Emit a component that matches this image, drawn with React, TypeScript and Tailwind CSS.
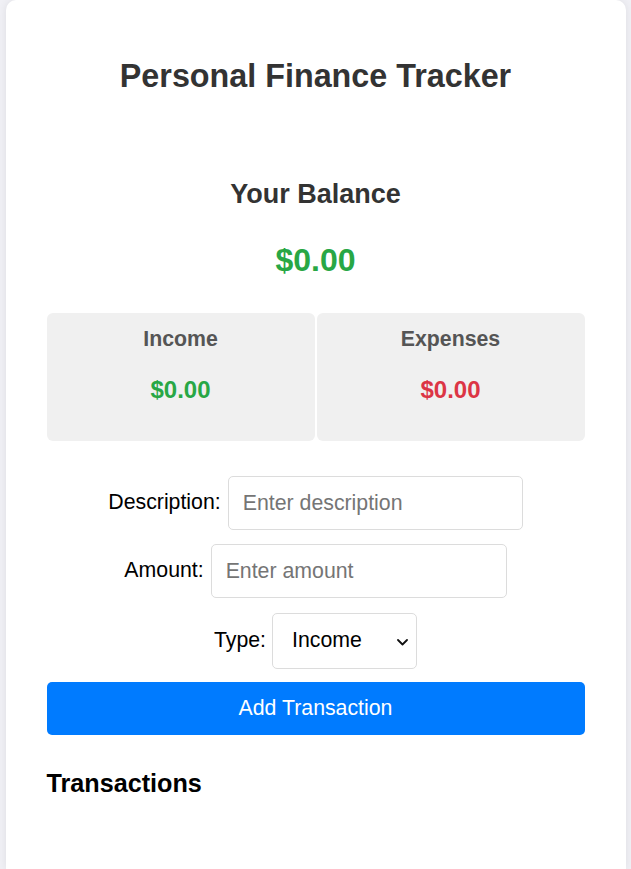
import React from "react";

export default function App() {
  const font = { fontFamily: '"Liberation Sans", Arial, sans-serif' };
  return (
    <div className="min-h-screen bg-[#f0f0f5]" style={font}>
      <div className="mx-auto w-[620px] min-h-[869px] bg-white rounded-t-[10px] shadow-[0_0_8px_rgba(0,0,0,0.08)] px-[41px] pt-[58px]">
        <h1 className="text-center text-[32.3px] leading-[37px] font-bold text-[#333]">
          Personal Finance Tracker
        </h1>
        <h2 className="mt-[84px] text-center text-[27px] leading-[30px] font-bold text-[#333]">
          Your Balance
        </h2>
        <div className="mt-[33px] text-center text-[32px] leading-[37px] font-bold text-[#28a745]">
          $0.00
        </div>
        <div className="mt-[34px] grid grid-cols-2 gap-[2px]">
          <div className="h-[128px] rounded-[6px] bg-[#f0f0f0] pt-[14px] text-center">
            <div className="text-[21.3px] leading-[25px] font-bold text-[#555]">Income</div>
            <div className="mt-[24px] text-[24px] leading-[28px] font-bold text-[#28a745]">$0.00</div>
          </div>
          <div className="h-[128px] rounded-[6px] bg-[#f0f0f0] pt-[14px] text-center">
            <div className="text-[21.3px] leading-[25px] font-bold text-[#555]">Expenses</div>
            <div className="mt-[24px] text-[24px] leading-[28px] font-bold text-[#dc3545]">$0.00</div>
          </div>
        </div>
        <div className="mt-[35px] flex flex-col items-center gap-[14px] text-[21.3px] text-black">
          <div className="flex items-center gap-[7px]">
            <label>Description:</label>
            <input
              className="h-[54px] w-[295px] rounded-[5px] border border-[#dcdcdc] px-[14px] text-[21.3px] placeholder:text-[#757575] outline-none"
              placeholder="Enter description"
            />
          </div>
          <div className="flex items-center gap-[7px]">
            <label>Amount:</label>
            <input
              className="h-[54px] w-[296px] rounded-[5px] border border-[#dcdcdc] px-[14px] text-[21.3px] placeholder:text-[#757575] outline-none"
              placeholder="Enter amount"
            />
          </div>
          <div className="mt-[1px] flex items-center gap-[6px]">
            <label>Type:</label>
            <div className="relative h-[56px] w-[145px] rounded-[5px] border border-[#dcdcdc] flex items-center pl-[19px]">
              <span>Income</span>
              <svg className="absolute right-[8px] top-[25px]" width="11" height="7" viewBox="0 0 11 7" fill="none">
                <path d="M1 1l4.5 4.5L10 1" stroke="#111" strokeWidth="1.8" strokeLinecap="round" strokeLinejoin="round" />
              </svg>
            </div>
          </div>
        </div>
        <button className="mt-[13px] h-[53px] w-full rounded-[5px] bg-[#007bff] text-[21.3px] text-white">
          Add Transaction
        </button>
        <h3 className="mt-[34px] text-[25.2px] leading-[28px] font-bold text-black">Transactions</h3>
      </div>
    </div>
  );
}
